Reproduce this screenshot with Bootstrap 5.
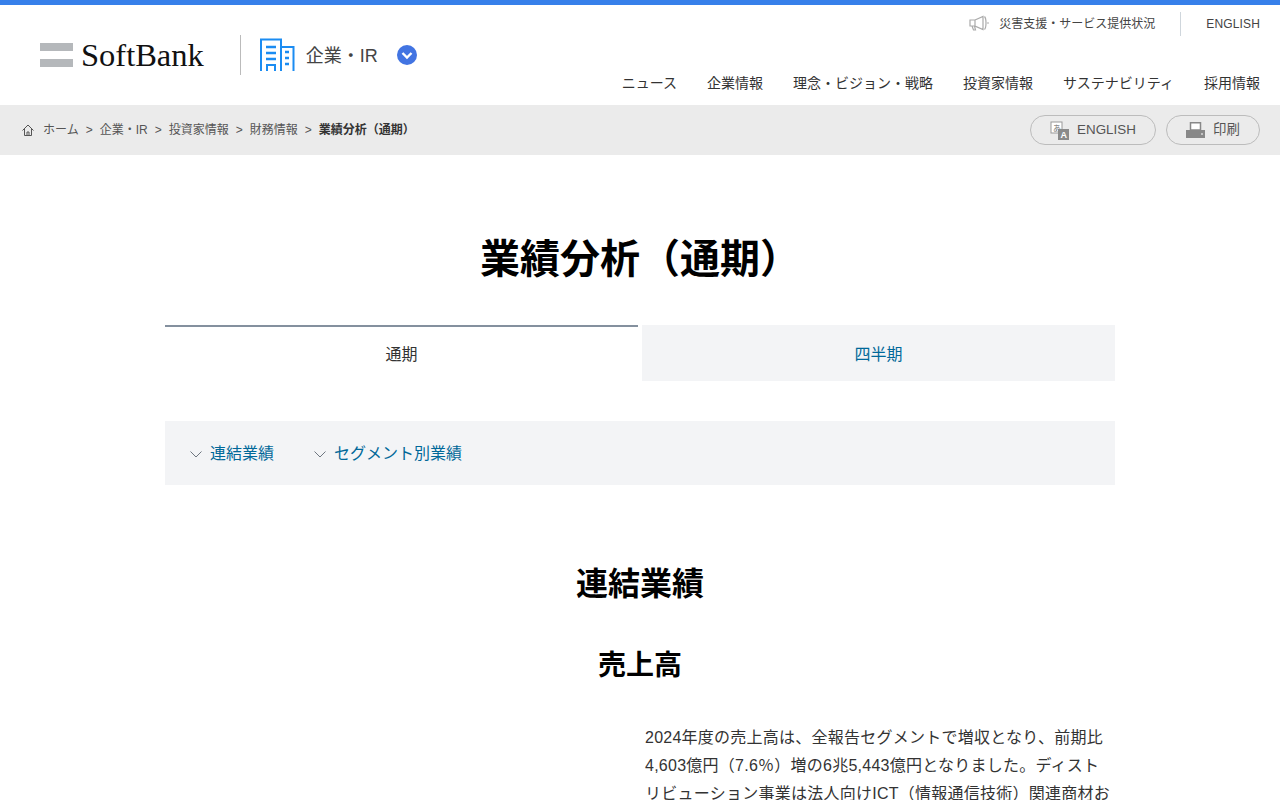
<!DOCTYPE html>
<html lang="ja">
<head>
<meta charset="utf-8">
<title>業績分析（通期）</title>
<link rel="stylesheet" href="https://cdn.jsdelivr.net/npm/bootstrap@5.3.0/dist/css/bootstrap.min.css">
<style>
html,body{height:800px;overflow:hidden}
body{font-family:"Liberation Sans","Noto Sans CJK JP",sans-serif;color:#333;background:#fff;font-size:16px}
a{text-decoration:none;color:inherit}
.site-head{border-top:5px solid #3780ea;height:105px}
.logo-word{font-family:"Liberation Serif",serif;font-size:32.5px;line-height:1;color:#111}
.logo-bars{width:33px;height:24px;border-top:8px solid #b5b8bb;border-bottom:8px solid #b5b8bb}
.head-left{padding:30px 0 0 40px}
.head-sep{width:1px;height:40px;background:#bbb;margin:0 19px 0 36px}
.site-label{font-size:18px;color:#444;margin-left:11px;padding-top:3px}
.chev-mark{margin-left:19px}
.head-right{padding:6px 20px 0 0}
.util-row{height:24px;font-size:12px;color:#444;padding-top:1px}
.util-note{margin-left:9px}
.util-en{letter-spacing:.15px}
.util-sep{width:1px;height:24px;background:#cfd6dc;margin:0 25px}
.nav-main{margin-top:36px;font-size:14px;color:#333;gap:30px;line-height:24px}
.crumb-bar{height:50px;background:#ebebeb;padding:0 20px 0 22px}
.crumb-list{font-size:12px;color:#555;gap:7px}
.crumb-list b{color:#333}
.crumb-home{margin-right:2px}
.pill-btn{height:30px;border:1px solid #bcbcbc;border-radius:15px;font-size:13.4px;color:#555;background:transparent}
.pill-en{width:126px}
.pill-pr{width:94px}
.pill-row{gap:10px}
.page-body{width:950px;margin:0 auto}
.page-title{font-size:40px;font-weight:700;color:#000;line-height:1.3;margin:78px 0 40px;text-align:center}
.tab-row{gap:4px}
.tab-on,.tab-off{height:56px;flex:1 1 0;font-size:16px}
.tab-on{border-top:2px solid #84909e;color:#333;padding-top:2px}
.tab-off{background:#f3f4f6;color:#006899;padding-top:4px}
.anchor-box{margin-top:40px;height:64px;background:#f3f4f6;padding:2px 25px 0;gap:40px;color:#006899}
.sec-title{font-size:32px;font-weight:700;color:#000;line-height:1.3;margin:79px 0 0;text-align:center}
.sub-title{font-size:28px;font-weight:700;color:#000;line-height:1.3;margin:42px 0 0;text-align:center}
.intro-row{margin-top:40px;gap:10px}
.intro-col{flex:1 1 0;min-width:0}
.intro-col p{font-size:16px;letter-spacing:.25px;line-height:28px;color:#333;margin:0}
</style>
</head>
<body>
<header class="site-head d-flex justify-content-between">
  <div class="head-left d-flex align-items-start">
    <a href="#" class="d-flex align-items-center gap-2" style="height:40px">
      <span class="logo-bars d-block"></span>
      <span class="logo-word">SoftBank</span>
    </a>
    <span class="head-sep"></span>
    <a href="#" class="d-flex align-items-center" style="height:40px">
      <svg width="35" height="34" viewBox="0 0 35 34" fill="none" stroke="#1b8cf2" stroke-width="2"><path d="M1 33V1.500H21V33M22 9H33.500V33"/><path d="M6 9h10M6 15h10M6 21h10" stroke-width="2.500"/><path d="M7 33V27h8v6"/><path d="M25 14h4M25 20h4M25 26h4" stroke-width="2.500"/></svg>
      <span class="site-label">企業・IR</span>
      <svg class="chev-mark" width="20" height="20" viewBox="0 0 20 20"><circle cx="10" cy="10" r="10" fill="#4274e2"/><path d="M5.500 8l4.500 4.500L14.500 8" fill="none" stroke="#fff" stroke-width="2.400"/></svg>
    </a>
  </div>
  <div class="head-right d-flex flex-column align-items-end">
    <div class="util-row d-flex align-items-center">
      <svg width="21" height="18" viewBox="0 0 21 18" fill="none" stroke="#aaa" stroke-width="1.200"><path d="M1 5h5v6H1zM6 5l8-3.500v13L6 11zM3 11l1.500 4h2L5.500 11"/><path d="M15.500 1.500c1 1 1.500 2 1.500 6.500s-.5 5.500-1.500 6.500M18 8h2" /></svg>
      <a href="#" class="util-note">災害支援・サービス提供状況</a>
      <span class="util-sep"></span>
      <a href="#" class="util-en">ENGLISH</a>
    </div>
    <nav class="nav-main d-flex">
      <a href="#">ニュース</a><a href="#">企業情報</a><a href="#">理念・ビジョン・戦略</a><a href="#">投資家情報</a><a href="#">サステナビリティ</a><a href="#">採用情報</a>
    </nav>
  </div>
</header>
<div class="crumb-bar d-flex align-items-center justify-content-between">
  <div class="crumb-list d-flex align-items-center">
    <svg class="crumb-home" width="12" height="12" viewBox="0 0 12 12" fill="none" stroke="#555"><path d="M.5 6.500L6 1l5.500 5.500M2.500 5v6.500h7V5M5 11.500V8h2v3.500"/></svg>
    <a href="#">ホーム</a><span>&gt;</span>
    <a href="#">企業・IR</a><span>&gt;</span>
    <a href="#">投資家情報</a><span>&gt;</span>
    <a href="#">財務情報</a><span>&gt;</span>
    <b>業績分析（通期）</b>
  </div>
  <div class="pill-row d-flex">
    <a href="#" class="pill-btn pill-en d-flex align-items-center justify-content-center">
      <svg width="19" height="19" viewBox="0 0 19 19" class="me-2"><rect x="1" y="1" width="11" height="11" fill="#fff" stroke="#999"/><text x="3" y="10" font-size="8" fill="#777">あ</text><rect x="8" y="8" width="11" height="11" fill="#8a8a8a"/><text x="10.500" y="17" font-size="9" font-weight="700" fill="#fff" font-family="Liberation Sans">A</text></svg>
      ENGLISH
    </a>
    <a href="#" class="pill-btn pill-pr d-flex align-items-center justify-content-center">
      <svg width="19" height="17" viewBox="0 0 19 17" class="me-2"><path d="M4.500 .8h10V8h-10z" fill="#fff" stroke="#888" stroke-width="1.500"/><path d="M0 8h19v8H0z" fill="#888"/><path d="M15 12h2" stroke="#fff"/></svg>
      印刷
    </a>
  </div>
</div>
<main class="page-body">
  <h1 class="page-title">業績分析（通期）</h1>
  <div class="tab-row d-flex">
    <a href="#" class="tab-on d-flex align-items-center justify-content-center">通期</a>
    <a href="#" class="tab-off d-flex align-items-center justify-content-center">四半期</a>
  </div>
  <div class="anchor-box d-flex align-items-center">
    <a href="#" class="d-flex align-items-center gap-2"><svg width="12" height="7" viewBox="0 0 12 7" fill="none" stroke="#6e7680"><path d="M.5 .5L6 6l5.500-5.500"/></svg>連結業績</a>
    <a href="#" class="d-flex align-items-center gap-2"><svg width="12" height="7" viewBox="0 0 12 7" fill="none" stroke="#6e7680"><path d="M.5 .5L6 6l5.500-5.500"/></svg>セグメント別業績</a>
  </div>
  <h2 class="sec-title">連結業績</h2>
  <h3 class="sub-title">売上高</h3>
  <div class="intro-row d-flex">
    <div class="intro-col"></div>
    <div class="intro-col"><p>2024年度の売上高は、全報告セグメントで増収となり、前期比4,603億円（7.6％）増の6兆5,443億円となりました。ディストリビューション事業は法人向けICT（情報通信技術）関連商材および</p></div>
  </div>
</main>
</body>
</html>
